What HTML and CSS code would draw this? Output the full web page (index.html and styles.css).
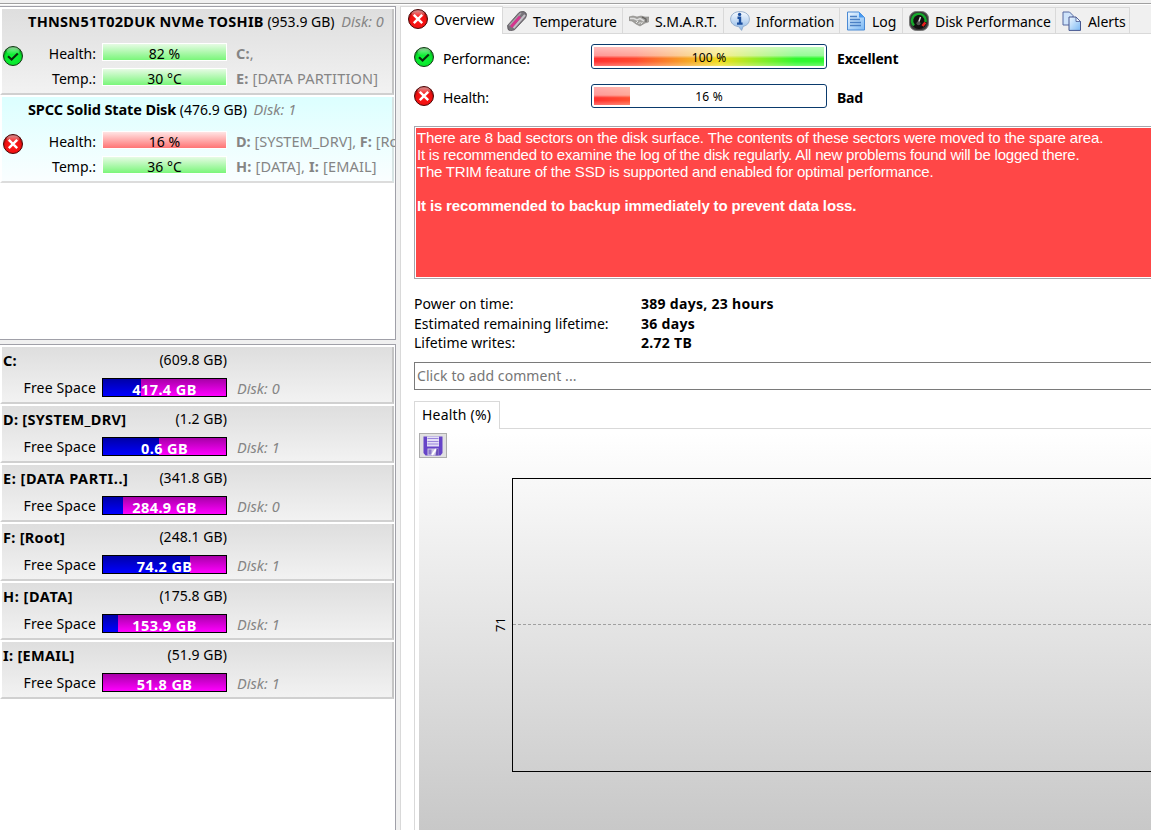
FILE: index.html
```html
<!DOCTYPE html>
<html lang="en">
<head>
    <meta charset="UTF-8">
    <meta name="viewport" content="width=device-width, initial-scale=1.0">
    <title>Disk Monitor</title>
    <link rel="stylesheet" href="styles.css">
</head>
<body>
    <!-- Shared icons -->
    <svg class="defs" width="0" height="0">
        <defs>
            <radialGradient id="greenBall" cx="0.5" cy="0.6" r="0.58">
                <stop offset="0" stop-color="#10f838"/><stop offset="0.7" stop-color="#08e42c"/><stop offset="1" stop-color="#067a14"/>
            </radialGradient>
            <radialGradient id="redBall" cx="0.5" cy="0.6" r="0.58">
                <stop offset="0" stop-color="#ff1818"/><stop offset="0.7" stop-color="#ee1010"/><stop offset="1" stop-color="#900808"/>
            </radialGradient>
            <linearGradient id="shine" x1="0" y1="0" x2="0" y2="1">
                <stop offset="0" stop-color="#fff" stop-opacity="0.55"/><stop offset="1" stop-color="#fff" stop-opacity="0"/>
            </linearGradient>
            <linearGradient id="paper" x1="0" y1="0" x2="1" y2="1">
                <stop offset="0" stop-color="#f0f8ff"/><stop offset="1" stop-color="#7ab8f4"/>
            </linearGradient>
            <linearGradient id="bubble" x1="0" y1="0" x2="0" y2="1">
                <stop offset="0" stop-color="#f8fbff"/><stop offset="1" stop-color="#8ab6e6"/>
            </linearGradient>
            <symbol id="ok" viewBox="0 0 20 20">
                <circle cx="10" cy="10" r="9.5" fill="url(#greenBall)" stroke="#163a18" stroke-width="1"/>
                <ellipse cx="10" cy="5" rx="6.5" ry="3.8" fill="url(#shine)"/>
                <path d="M5 10.2 L8.6 13.6 L14.8 7.4" fill="none" stroke="#0a2a0c" stroke-width="2.1"/>
            </symbol>
            <symbol id="bad" viewBox="0 0 20 20">
                <circle cx="10" cy="10" r="9.5" fill="url(#redBall)" stroke="#4a0808" stroke-width="1"/>
                <ellipse cx="10" cy="5" rx="6.5" ry="3.8" fill="url(#shine)"/>
                <path d="M5.8 5.8 L14.2 14.2 M14.2 5.8 L5.8 14.2" fill="none" stroke="#fff" stroke-width="2.4"/>
            </symbol>
        </defs>
    </svg>

    <div class="window">
        <div class="sidebar">
            <div class="disks">
                <div class="disk">
                    <svg class="state"><use href="#ok"/></svg>
                    <div class="disk-title"><b class="n1">THNSN51T02DUK NVMe TOSHIB</b> <span class="size">(953.9 GB)</span> <i>Disk: 0</i></div>
                    <div class="disk-row"><span class="lbl">Health:</span><span class="meter">82 %</span><span class="parts"><b>C:</b>,</span></div>
                    <div class="disk-row"><span class="lbl">Temp.:</span><span class="meter">30 °C</span><span class="parts"><b>E:</b> [DATA PARTITION]</span></div>
                </div>
                <div class="disk selected">
                    <svg class="state"><use href="#bad"/></svg>
                    <div class="disk-title"><b class="n2">SPCC Solid State Disk</b> <span class="size">(476.9 GB)</span> <i>Disk: 1</i></div>
                    <div class="disk-row"><span class="lbl">Health:</span><span class="meter red">16 %</span><span class="parts long"><b>D:</b> [SYSTEM_DRV], <b>F:</b> [Root]</span></div>
                    <div class="disk-row"><span class="lbl">Temp.:</span><span class="meter">36 °C</span><span class="parts"><b>H:</b> [DATA], <b>I:</b> [EMAIL]</span></div>
                </div>
            </div>

            <div class="volumes">
                <div class="volume">
                    <div class="vol-head"><b>C:</b><span>(609.8 GB)</span></div>
                    <div class="vol-row"><span class="lbl">Free Space</span><span class="space"><span class="used" style="width: 38px"></span><b>417.4 GB</b></span><i>Disk: 0</i></div>
                </div>
                <div class="volume">
                    <div class="vol-head"><b>D: [SYSTEM_DRV]</b><span>(1.2 GB)</span></div>
                    <div class="vol-row"><span class="lbl">Free Space</span><span class="space"><span class="used" style="width: 56px"></span><b>0.6 GB</b></span><i>Disk: 1</i></div>
                </div>
                <div class="volume">
                    <div class="vol-head"><b class="wide">E: [DATA PARTI..]</b><span>(341.8 GB)</span></div>
                    <div class="vol-row"><span class="lbl">Free Space</span><span class="space"><span class="used" style="width: 20px"></span><b>284.9 GB</b></span><i>Disk: 0</i></div>
                </div>
                <div class="volume">
                    <div class="vol-head"><b>F: [Root]</b><span>(248.1 GB)</span></div>
                    <div class="vol-row"><span class="lbl">Free Space</span><span class="space"><span class="used" style="width: 87px"></span><b>74.2 GB</b></span><i>Disk: 1</i></div>
                </div>
                <div class="volume">
                    <div class="vol-head"><b class="wide">H: [DATA]</b><span>(175.8 GB)</span></div>
                    <div class="vol-row"><span class="lbl">Free Space</span><span class="space"><span class="used" style="width: 15px"></span><b>153.9 GB</b></span><i>Disk: 1</i></div>
                </div>
                <div class="volume">
                    <div class="vol-head"><b>I: [EMAIL]</b><span>(51.9 GB)</span></div>
                    <div class="vol-row"><span class="lbl">Free Space</span><span class="space"><b>51.8 GB</b></span><i>Disk: 1</i></div>
                </div>
            </div>
        </div>

        <div class="main">
            <div class="tabs">
                <div class="tab active"><svg width="20" height="20"><use href="#bad"/></svg><span>Overview</span></div>
                <div class="tab t-temp">
                    <svg width="20" height="20" viewBox="0 0 20 20">
                        <path d="M0.5 14.5 L12 1.5 Q14 0 17 0.6 L19 2 Q20.3 4 18.5 7 L7.5 18.8 Q3 20.6 1 18.4Z" fill="#77737a" stroke="#4c484e" stroke-width="0.7"/>
                        <path d="M6.5 17 L18 4" stroke="#c4bfc6" stroke-width="2"/>
                        <path d="M2.5 14.5 L14 2" stroke="#a8a4aa" stroke-width="1.6"/>
                        <path d="M4 16 L13 5.6" stroke="#d6348e" stroke-width="2.8"/>
                    </svg><span>Temperature</span></div>
                <div class="tab t-smart">
                    <svg width="20" height="20" viewBox="0 0 20 20">
                        <path d="M0 6 L4 5 L8 6 L12 5 L16 6 L20 6 L19.5 11 L16 12 L11 15 L7 13 L3 10 L0 9.5Z" fill="#a09f9c" stroke="#85837f" stroke-width="0.6"/>
                        <path d="M1 7.5 H5 L8 9 L11 7.5 L15 10" fill="none" stroke="#ddd" stroke-width="1.5"/>
                        <path d="M7 12 L9 10 M9.5 13 L11.5 11 M12 13 L13.5 11" stroke="#e8e8e6" stroke-width="1"/>
                        <path d="M13 6 L17 8 V11" fill="none" stroke="#5e5c5a" stroke-width="1.2"/>
                    </svg><span>S.M.A.R.T.</span></div>
                <div class="tab t-info">
                    <svg width="20" height="20" viewBox="0 0 20 20">
                        <path d="M10 0.6 C16 0.6 19.4 4 19.4 8.2 C19.4 12 17 14.4 13.2 15.4 L11.6 19.4 L8.6 15.6 C3.6 15 0.6 12 0.6 8.2 C0.6 4 4 0.6 10 0.6Z" fill="url(#bubble)" stroke="#8fa9c8" stroke-width="0.9"/>
                        <path d="M7.5 6.8 H10 V12 M7 12.6 H12.6" fill="none" stroke="#1c4f9e" stroke-width="2.4"/>
                        <circle cx="9.6" cy="3.4" r="1.7" fill="#1c4f9e"/>
                    </svg><span>Information</span></div>
                <div class="tab t-log">
                    <svg width="20" height="20" viewBox="0 0 20 20">
                        <path d="M1.5 1 H13 L18.5 6.5 V19 H1.5Z" fill="url(#paper)" stroke="#4a8ad4"/>
                        <path d="M13 1 V6.5 H18.5Z" fill="#4a9af0"/>
                        <path d="M4 5.5 H11 M4 8.5 H14 M4 11.5 H15 M4 14.5 H15" stroke="#4a80c4" stroke-width="1.3"/>
                    </svg><span>Log</span></div>
                <div class="tab t-perf">
                    <svg width="20" height="20" viewBox="0 0 20 20">
                        <rect x="0.5" y="0.5" width="19" height="19" rx="7" fill="#3a3a3a" stroke="#777"/>
                        <circle cx="10" cy="10" r="8" fill="#111"/>
                        <path d="M5 14.5 A6.8 6.8 0 1 1 16.5 11" fill="none" stroke="#16a82c" stroke-width="2.4"/>
                        <path d="M16.3 11.5 L13.5 15" stroke="#e8201c" stroke-width="2.6"/>
                        <path d="M9 13 L11.5 6" stroke="#ddd" stroke-width="1.5"/>
                        <circle cx="9.5" cy="12.2" r="2" fill="#555"/>
                    </svg><span>Disk Performance</span></div>
                <div class="tab t-alert">
                    <svg width="20" height="20" viewBox="0 0 20 20">
                        <path d="M1 1 H7.5 L11 4.5 V14 H1Z" fill="#cfe4fb" stroke="#5668a0"/>
                        <path d="M7 6 H14 L18.5 10.5 V19.4 H7Z" fill="url(#paper)" stroke="#46568e"/>
                        <path d="M14 6 V10.5 H18.5Z" fill="#eaf4ff" stroke="#46568e" stroke-width="0.8"/>
                    </svg><span>Alerts</span></div>
            </div>

            <div class="page">
                <div class="rating">
                    <svg width="20" height="20"><use href="#ok"/></svg>
                    <span class="rating-label">Performance:</span>
                    <div class="gauge"><div class="fill"></div><span class="pct">100 %</span></div>
                    <b>Excellent</b>
                </div>
                <div class="rating health">
                    <svg width="20" height="20"><use href="#bad"/></svg>
                    <span class="rating-label">Health:</span>
                    <div class="gauge"><div class="fill low"></div><span class="pct">16 %</span></div>
                    <b>Bad</b>
                </div>

                <div class="message">
                    <p class="m1">There are 8 bad sectors on the disk surface. The contents of these sectors were moved to the spare area.</p>
                    <p class="m2">It is recommended to examine the log of the disk regularly. All new problems found will be logged there.</p>
                    <p class="m3">The TRIM feature of the SSD is supported and enabled for optimal performance.</p>
                    <p class="warn">It is recommended to backup immediately to prevent data loss.</p>
                </div>

                <div class="stats">
                    <span>Power on time:</span><b>389 days, 23 hours</b>
                    <span>Estimated remaining lifetime:</span><b>36 days</b>
                    <span>Lifetime writes:</span><b>2.72 TB</b>
                </div>

                <div class="comment">Click to add comment ...</div>

                <div class="chart-tabs"><div class="chart-tab">Health (%)</div></div>
                <div class="chart-page">
                    <div class="chart">
                        <div class="save">
                            <svg width="20" height="20" viewBox="0 0 20 20">
                                <path d="M0.5 0.5 H19.5 V17 L17.5 19.5 H2.5 L0.5 17Z" fill="#6644c8"/>
                                <rect x="4" y="0.5" width="12" height="10" fill="#e4dff6"/>
                                <path d="M4.5 2.5 H15.5 M4.5 5.5 H15.5 M4.5 8 H15.5" stroke="#9a86dc" stroke-width="1"/>
                                <rect x="4.5" y="12.5" width="11" height="7" fill="#cdc6e6"/>
                                <path d="M5.5 13.5 H8.5 V18.5 H5.5Z" fill="#8a78c8"/>
                                <path d="M9 19 L13 13" stroke="#fff" stroke-width="2"/>
                                <path d="M13.5 13 H15.5 V19.5 H12.5Z" fill="#6a50b8"/>
                            </svg>
                        </div>
                        <div class="plot-row">
                            <div class="axis"><span>71</span></div>
                            <div class="plot"><div class="line"></div></div>
                        </div>
                    </div>
                </div>
            </div>
        </div>
    </div>
</body>
</html>
```

FILE: styles.css
```css
* { box-sizing: border-box; }
body { margin: 0; height: 830px; overflow: hidden; background: #f0f0f0; color: #000; font-family: "Noto Sans", "Open Sans", sans-serif; font-size: 14px; letter-spacing: 0; line-height: 20px; white-space: nowrap; }
p { margin: 0; }
.defs { display: block; position: absolute; }
.window { display: flex; height: 830px; border-top: 3px solid #f0f0f0; padding-top: 3px; background: linear-gradient(#a0a0a0 0 1px, #fff 1px 2px, transparent 2px) 0 0 no-repeat; }

/* left side */
.sidebar { width: 396px; flex: none; display: flex; flex-direction: column; gap: 4px; }
.disks { height: 334px; overflow: hidden; background: #fff; border: 1px solid #a0a0a8; border-left: none; padding: 2px 1px 0 0; }
.volumes { flex: 1; background: #fff; border: 1px solid #a0a0a8; border-left: none; border-bottom: none; padding: 2px 1px 0 0; }
.disk { position: relative; height: 86px; margin-bottom: 2px; padding: 2px 0 0; background: linear-gradient(#dedede, #f2f2f2); border-right: 2px solid #c4c4c4; border-bottom: 2px solid #d0d0d0; border-left: 2px solid #fff; }
.disk.selected { background: linear-gradient(#dcffff, #fafeff); border-right-color: #d8e4e4; border-bottom-color: #dcdcdc; }
.disk i, .volume i, .parts { color: #858585; }
.disk i, .volume i { font-size: 14.5px; letter-spacing: 0.05px; }
.state { position: absolute; left: 1px; top: 37px; width: 20px; height: 20px; }
.disk-title { padding-left: 26px; height: 30px; }
.disk-title b { font-size: 14.5px; }
.n1 { letter-spacing: 0.28px; }
.n2 { letter-spacing: -0.12px; }
.disk-title i { margin-left: 3px; }
.disk-row { display: flex; align-items: center; height: 25px; }
.lbl { width: 94px; flex: none; text-align: right; }
.meter { width: 125px; height: 18px; flex: none; margin: -4px 0 0 6px; border: 1px solid #fff; text-align: center; line-height: 19px; background: linear-gradient(#e6fbe4, #7af67a); }
.meter.red { background: linear-gradient(#ffe4e4, #ff7474); }
.parts { margin: -2px 0 0 9px; font-size: 14.5px; letter-spacing: 0.18px; }
.parts.long { letter-spacing: 0; }
.volume { height: 57px; margin-bottom: 2px; padding-top: 3px; background: linear-gradient(#dedede, #f2f2f2); border-right: 2px solid #c4c4c4; border-bottom: 2px solid #d0d0d0; border-left: 2px solid #fff; }
.vol-head { display: flex; justify-content: space-between; width: 225px; height: 20px; padding-left: 1px; letter-spacing: 0.05px; }
.vol-head b { font-size: 14.5px; letter-spacing: 0.3px; }
.vol-head .wide { letter-spacing: 0.55px; }
.vol-row { display: flex; align-items: center; height: 20px; margin-top: 9px; }
.vol-row .lbl { letter-spacing: 0.15px; margin-top: -2px; }
.vol-row i { margin-top: -3px; }
.space { position: relative; width: 125px; height: 19px; margin: -3px 10px 0 6px; border: 1px solid #000; background: linear-gradient(#a800a8, #ff00ff); color: #fff; text-align: center; line-height: 20px; }
.space b { position: relative; font-size: 14.5px; letter-spacing: 0.4px; }
.used { position: absolute; left: 0; top: 0; bottom: 0; background: linear-gradient(#0000a8, #0000ff); }

/* right side */
.main { flex: 1; min-width: 0; margin-left: 4px; display: flex; flex-direction: column; }
.tabs { display: flex; align-items: flex-end; height: 28px; border-bottom: 1px solid #d9d9d9; letter-spacing: -0.08px; }
.tab { display: flex; align-items: center; gap: 6px; height: 26px; flex: none; border: 1px solid #d9d9d9; border-left: none; border-bottom: none; padding-left: 4px; }
.tab svg { flex: none; }
.tab span { padding-top: 2px; }
.tab.active { width: 103px; height: 28px; margin-bottom: -1px; padding: 0 0 4px 7px; background: #fff; border-left: 1px solid #d9d9d9; }
.t-temp { width: 120px; }
.t-smart { width: 101px; padding-left: 6px; }
.t-info { width: 116px; padding-left: 6px; }
.t-log { width: 63px; padding-left: 6px; }
.t-perf { width: 153px; padding-left: 6px; }
.t-alert { width: 74px; padding-left: 6px; }
.page { flex: 1; min-height: 0; display: flex; flex-direction: column; background: #fff; border-left: 1px solid #d9d9d9; padding: 9px 0 0 13px; }
.rating { display: flex; align-items: center; height: 27px; letter-spacing: -0.2px; }
.rating.health { margin-top: 12px; }
.rating-label { width: 148px; margin-left: 9px; padding-top: 4px; }
.rating b { margin-left: 10px; padding-top: 4px; }
.gauge { position: relative; width: 236px; height: 25px; border: 1px solid #0a3a6c; border-radius: 3px; padding: 2px; background: #fff; }
.health .gauge { height: 24px; }
.fill { height: 100%; background: linear-gradient(rgba(255,255,255,0.68), rgba(255,255,255,0.5) 45%, rgba(255,255,255,0) 60%, rgba(255,255,255,0) 75%, rgba(255,255,255,0.3)), linear-gradient(90deg, #ff3030, #ff4a30 18%, #f0e020 55%, #30f830 88%); }
.fill.low { width: 36px; background: linear-gradient(rgba(255,255,255,0.6), rgba(255,255,255,0.5) 45%, rgba(255,255,255,0) 60%, rgba(255,255,255,0) 75%, rgba(255,255,255,0.3)), linear-gradient(90deg, #ff3030, #ff5030); }
.pct { position: absolute; left: 0; right: 0; top: 3px; text-align: center; font-size: 12px; letter-spacing: 0.2px; }
.health .pct { top: 2px; }
.message { flex: none; height: 153px; margin-top: 17px; padding: 2px 1px; background: #ff4747; color: #fff; border: 1px solid #a6a6ae; border-right: none; box-shadow: inset 1px 1px #fff, inset 0 -1px #fff; font-family: "Liberation Sans", Arial, sans-serif; font-size: 15px; line-height: 17px; }
.message p { padding-left: 1px; }
.m1 { letter-spacing: -0.15px; }
.m2 { letter-spacing: -0.21px; }
.m3 { letter-spacing: -0.22px; }
.warn { margin-top: 17px; font-weight: bold; letter-spacing: -0.15px; }
.stats { display: grid; grid-template-columns: 227px 1fr; grid-template-rows: 20px 19px 20px; margin-top: 15px; letter-spacing: 0.03px; }
.stats b { letter-spacing: 0.3px; }
.comment { height: 28px; flex: none; margin-top: 9px; padding: 3px 2px; border: 1px solid #7a7a7a; border-right: none; color: #767676; letter-spacing: 0.08px; }
.chart-tabs { display: flex; height: 28px; flex: none; margin-top: 11px; border-bottom: 1px solid #d9d9d9; }
.chart-tab { width: 86px; height: 28px; background: #fff; border: 1px solid #d9d9d9; border-bottom: none; padding: 3px 7px; letter-spacing: 0.2px; }
.chart-page { flex: 1; min-height: 0; border-left: 1px solid #d9d9d9; padding: 4px 0 0 4px; }
.chart { height: 100%; background: linear-gradient(#fff, #c8c8c8); }
.save { width: 28px; height: 25px; border: 1px solid #adadad; background: #e1e1e1; padding: 2px 3px; }
.save svg { display: block; }
.plot-row { display: flex; height: 294px; margin-top: 20px; }
.axis { width: 93px; flex: none; display: flex; align-items: center; justify-content: flex-end; padding: 0 2px 1px 0; }
.axis span { writing-mode: vertical-rl; transform: rotate(180deg); font-size: 13px; }
.plot { flex: 1; border: 1px solid #000; border-right: none; display: flex; align-items: center; padding-bottom: 2px; }
.line { width: 100%; border-top: 1px dashed #a0a0a0; }
```
